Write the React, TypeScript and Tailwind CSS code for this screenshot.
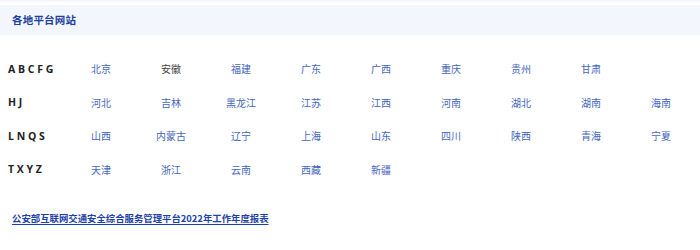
import React from "react";

const rows: { label: string; cities: string[] }[] = [
  { label: "A B C F G", cities: ["北京", "安徽", "福建", "广东", "广西", "重庆", "贵州", "甘肃"] },
  { label: "H J", cities: ["河北", "吉林", "黑龙江", "江苏", "江西", "河南", "湖北", "湖南", "海南"] },
  { label: "L N Q S", cities: ["山西", "内蒙古", "辽宁", "上海", "山东", "四川", "陕西", "青海", "宁夏"] },
  { label: "T X Y Z", cities: ["天津", "浙江", "云南", "西藏", "新疆"] },
];

export default function App() {
  const font = { fontFamily: '"Noto Sans CJK SC", "Noto Sans", sans-serif' };
  return (
    <div className="w-[700px] h-[250px] bg-white overflow-hidden" style={font}>
      <div className="h-[2px] bg-[#f4f6fa]" />
      <div className="h-[3px]" />
      <div className="h-[30px] bg-[#f3f7fd] flex items-center pl-[12px]">
        <span className="text-[10.5px] font-bold text-[#1f3f9e] tracking-[0.2px]">各地平台网站</span>
      </div>
      <div className="pl-[8px] pt-[17px]">
        {rows.map((r) => (
          <div key={r.label} className="flex items-center h-[33.5px]">
            <div
              className="w-[58px] pt-[2px] text-[10.5px] font-bold text-[#222] whitespace-pre"
              style={{ fontFamily: '"Open Sans", "Noto Sans", sans-serif' }}
            >
              {r.label}
            </div>
            {r.cities.map((c) => (
              <div
                key={c}
                className={
                  "w-[70px] text-center text-[10px] " +
                  (c === "安徽" ? "text-[#444]" : "text-[#4466bb]")
                }
              >
                {c}
              </div>
            ))}
          </div>
        ))}
      </div>
      <div className="pl-[12px] pt-[17px]">
        <span className="text-[9.4px] font-bold text-[#1d3fa6] underline underline-offset-2">
          公安部互联网交通安全综合服务管理平台2022年工作年度报表
        </span>
      </div>
    </div>
  );
}
